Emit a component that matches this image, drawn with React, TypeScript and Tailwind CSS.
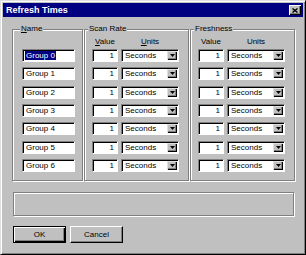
import React from "react";

const rows = [0, 1, 2, 3, 4, 5, 6];

function Field({ className = "", children }: { className?: string; children?: React.ReactNode }) {
  return (
    <div
      className={`h-[13px] border border-t-[#808080] border-l-[#808080] border-r-white border-b-white bg-white shadow-[inset_1px_1px_0_#000] ${className}`}
    >
      {children}
    </div>
  );
}

function Units() {
  return (
    <Field className="flex w-[58px] items-stretch">
      <span className="flex-1 pl-[3px] pt-px leading-[10px]">Seconds</span>
      <span className="m-px flex w-[10px] items-center justify-center bg-[#c0c0c0] shadow-[inset_1px_1px_0_#dfdfdf,inset_-1px_-1px_0_#000,inset_-2px_-2px_0_#808080]">
        <svg width="5" height="3" viewBox="0 0 5 3">
          <path d="M0 0h5L2.5 3z" fill="#000" />
        </svg>
      </span>
    </Field>
  );
}

function Group({
  label,
  labelLeft,
  className,
  children,
}: {
  label: React.ReactNode;
  labelLeft: string;
  className: string;
  children: React.ReactNode;
}) {
  return (
    <div
      className={`relative h-[152px] border border-[#808080] pt-[7px] shadow-[inset_1px_1px_0_#fff,1px_1px_0_#fff] ${className}`}
    >
      <span className={`absolute top-[-6px] ${labelLeft} bg-[#c0c0c0] px-px leading-[10px]`}>
        {label}
      </span>
      {children}
    </div>
  );
}

export default function App() {
  return (
    <div className="h-[255px] w-[306px] bg-[#c0c0c0] font-['Liberation_Sans',Arial,sans-serif] text-[8px] text-black">
      <div className="flex h-full flex-col border border-t-[#dfdfdf] border-l-[#dfdfdf] border-r-black border-b-black p-[2px] shadow-[inset_1px_1px_0_#fff,inset_-1px_-1px_0_#808080]">
        {/* title bar */}
        <div className="flex h-[14px] items-center justify-between bg-[#000080] pl-[3px] pr-[2px]">
          <span className="text-[9px] font-bold leading-none text-white">Refresh Times</span>
          <span className="flex h-[10px] w-[12px] items-center justify-center bg-[#c0c0c0] shadow-[inset_1px_1px_0_#fff,inset_-1px_-1px_0_#000,inset_-2px_-2px_0_#808080]">
            <svg width="6" height="5" viewBox="0 0 6 5">
              <path d="M0.5 0.5L5.5 4.5M5.5 0.5L0.5 4.5" stroke="#000" strokeWidth="1.4" />
            </svg>
          </span>
        </div>

        {/* group boxes */}
        <div className="ml-[9px] mt-[12px] flex gap-px">
          <Group
            className="w-[71px] pl-[9px]"
            labelLeft="left-[7px]"
            label={
              <>
                <span className="underline">N</span>ame
              </>
            }
          >
            <div className="mb-[2px] h-[10px]" />
            <div className="flex flex-col gap-[5.33px]">
              {rows.map((i) => (
                <Field key={i} className="w-[53px] pl-[2px] pt-px leading-[10px]">
                  {i === 0 ? (
                    <span className="bg-[#000080] px-px text-white">Group 0</span>
                  ) : (
                    <span className="px-px">Group {i}</span>
                  )}
                </Field>
              ))}
            </div>
          </Group>

          <Group className="w-[105px] pl-[7px]" labelLeft="left-[3px]" label="Scan Rate">
            <div className="mb-[2px] flex h-[10px] gap-[3px] leading-[10px]">
              <span className="w-[26px] text-center">
                <span className="underline">V</span>alue
              </span>
              <span className="w-[58px] text-center">
                <span className="underline">U</span>nits
              </span>
            </div>
            <div className="flex flex-col gap-[5.33px]">
              {rows.map((i) => (
                <div key={i} className="flex gap-[3px]">
                  <Field className="w-[26px] pr-[3px] pt-px text-right leading-[10px]">1</Field>
                  <Units />
                </div>
              ))}
            </div>
          </Group>

          <Group className="w-[105px] pl-[7px]" labelLeft="left-[3px]" label="Freshness">
            <div className="mb-[2px] flex h-[10px] gap-[3px] leading-[10px]">
              <span className="w-[26px] text-center">Value</span>
              <span className="w-[58px] text-center">Units</span>
            </div>
            <div className="flex flex-col gap-[5.33px]">
              {rows.map((i) => (
                <div key={i} className="flex gap-[3px]">
                  <Field className="w-[26px] pr-[3px] pt-px text-right leading-[10px]">1</Field>
                  <Units />
                </div>
              ))}
            </div>
          </Group>
        </div>

        {/* status area */}
        <div className="ml-[10px] mt-[11px] h-[24px] w-[281px] border border-[#808080] shadow-[inset_1px_1px_0_#fff,1px_1px_0_#fff]" />

        {/* buttons */}
        <div className="ml-[10px] mt-[10px] flex gap-[4px]">
          <button className="flex h-[17px] w-[53px] items-center justify-center border border-black bg-[#c0c0c0] leading-none shadow-[inset_1px_1px_0_#fff,inset_-1px_-1px_0_#000,inset_-2px_-2px_0_#808080]">
            OK
          </button>
          <button className="flex h-[17px] w-[53px] items-center justify-center border border-t-white border-l-white border-r-black border-b-black bg-[#c0c0c0] leading-none shadow-[inset_-1px_-1px_0_#808080]">
            Cancel
          </button>
        </div>
      </div>
    </div>
  );
}
